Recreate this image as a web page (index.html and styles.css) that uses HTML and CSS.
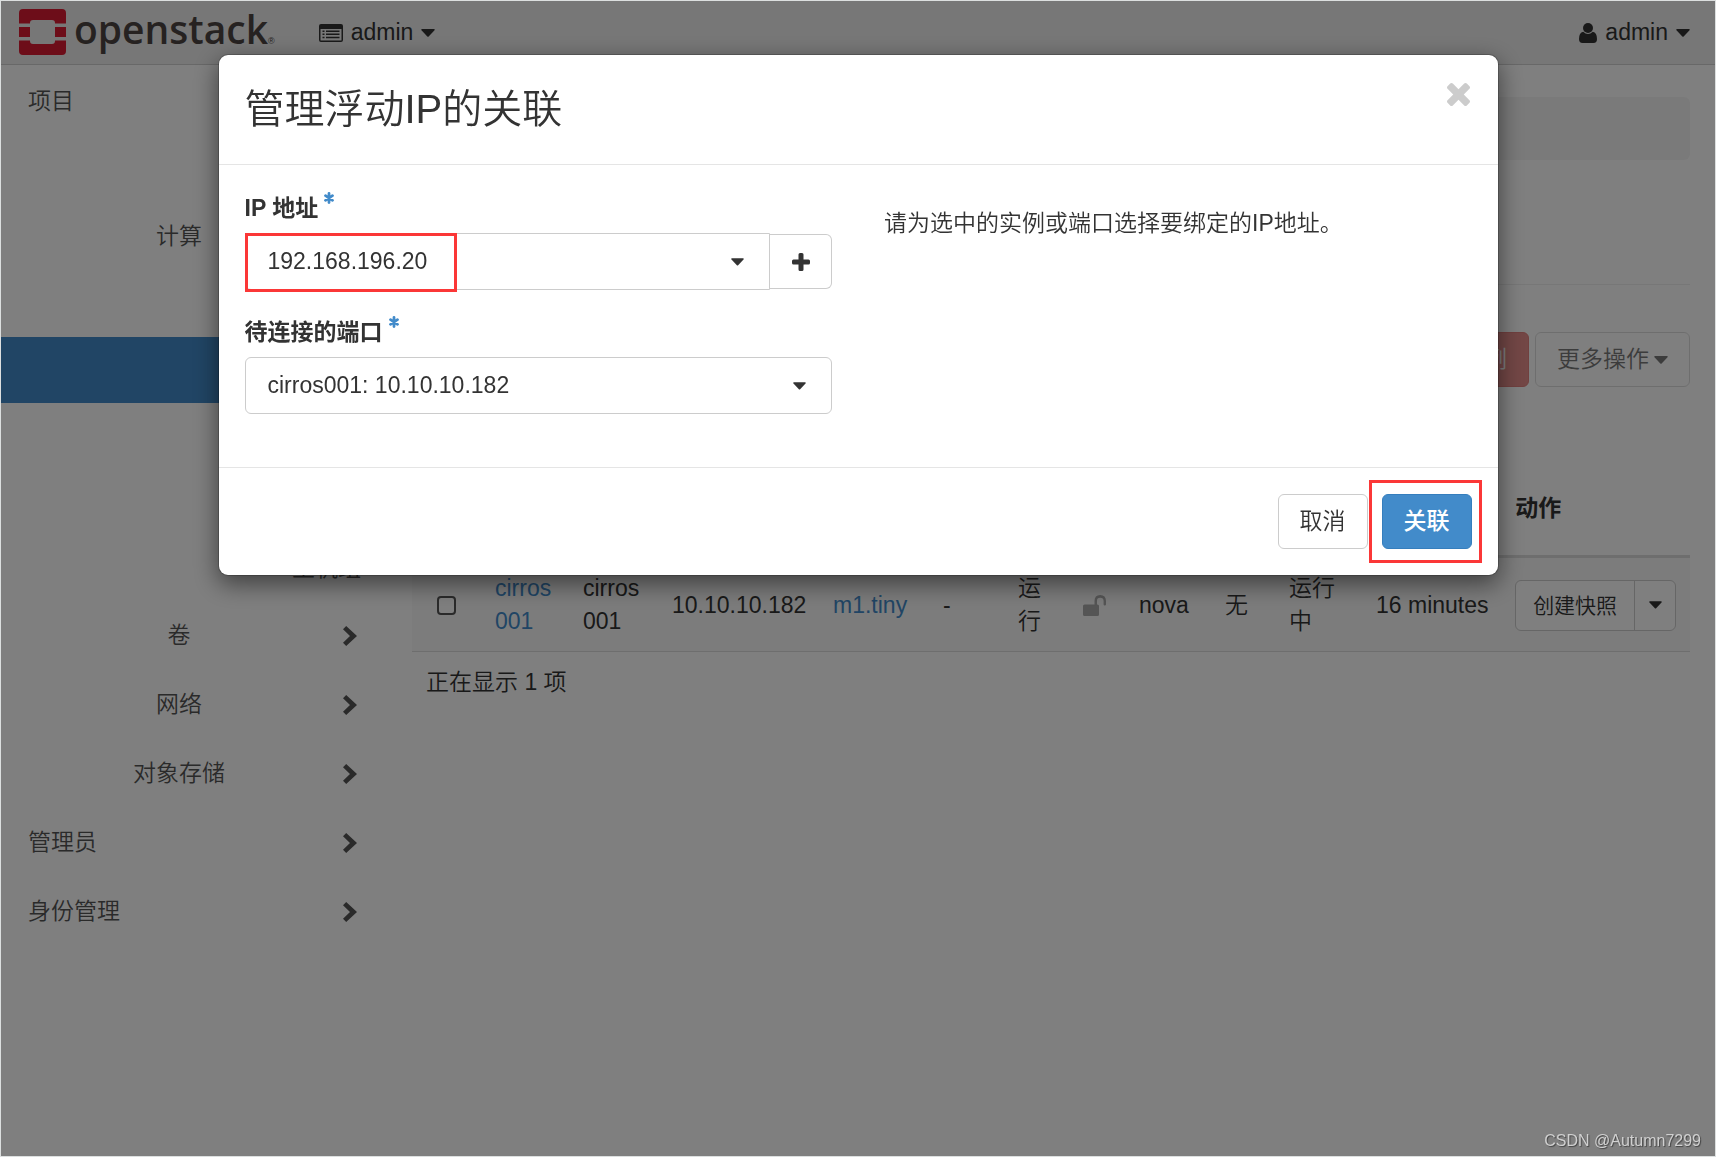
FILE: index.html
```html
<!DOCTYPE html>
<html lang="zh-CN">
<head>
<meta charset="utf-8">
<meta name="viewport" content="width=device-width, initial-scale=1">
<title>管理浮动IP的关联 - OpenStack Dashboard</title>
<link rel="stylesheet" href="styles.css">
</head>
<body>
<svg class="defs" aria-hidden="true">
  <symbol id="caret" viewBox="0 0 14 8"><path d="M1 0h12q1.200 .4 .5 1.300L7.700 7.500q-.7.700-1.400 0L.5 1.300Q-.2.400 1 0z"/></symbol>
  <symbol id="chevron" viewBox="0 0 14 20"><path d="M0 3.200 3.200 0 14 10 3.200 20 0 16.800 7 10z"/></symbol>
  <symbol id="chevron-down" viewBox="0 0 20 14"><path d="M3.200 0 0 3.200 10 14 20 3.200 16.800 0 10 7z"/></symbol>
  <symbol id="asterisk" viewBox="0 0 10 12"><path d="M5 1.500v9M1.500 3.700l7 4.600M8.500 3.700l-7 4.600" fill="none" stroke="currentColor" stroke-width="2.800" stroke-linecap="round"/></symbol>
</svg>

<header class="navbar">
  <a class="brand" href="#" aria-label="openstack">
    <svg class="mark" viewBox="0 0 47 46"><g fill="#da1a32"><path d="M4 0h39q4 0 4 4v10.500H36V14q0-3-3-3H14q-3 0-3 3v.5H0V4q0-4 4-4z"/><path d="M0 18h11v10H0zM36 18h11v10H36z"/><path d="M0 31.500h11v.5q0 3 3 3h19q3 0 3-3v-.5h11V42q0 4-4 4H4q-4 0-4-4z"/></g></svg>
    <span class="wordmark">openstack</span><span class="reg">®</span>
  </a>
  <button class="nav-menu" type="button">
    <svg class="icon-list" viewBox="0 0 24 18"><path fill-rule="evenodd" d="M2 0h20q2 0 2 2v14q0 2-2 2H2q-2 0-2-2V2q0-2 2-2zM1.500 5v11q0 .5.5.5h20q.5 0 .5-.5V5zM3.500 6.500h2V8h-2zM7 6.500h13.500V8H7zM3.500 9.500h2V11h-2zM7 9.500h13.500V11H7zM3.500 12.700h2v1.500h-2zM7 12.700h13.500v1.500H7z"/></svg>
    <span>admin</span>
    <svg class="caret"><use href="#caret"/></svg>
  </button>
  <button class="nav-menu nav-user" type="button">
    <svg class="icon-user" viewBox="0 0 18 20"><circle cx="9" cy="5" r="5"/><path d="M4.200 8.700Q9 13.300 13.800 8.700 18 9.500 18 16q0 4-3.500 4h-11Q0 20 0 16q0-6.500 4.200-7.300z"/></svg>
    <span>admin</span>
    <svg class="caret"><use href="#caret"/></svg>
  </button>
</header>

<div class="layout">
  <nav class="sidebar">
    <a class="group" href="#"><span>项目</span><svg class="down"><use href="#chevron-down"/></svg></a>
    <a class="leaf" href="#">API访问</a>
    <a class="group nested" href="#"><span>计算</span><svg class="down"><use href="#chevron-down"/></svg></a>
    <a class="leaf" href="#">概况</a>
    <a class="leaf active" href="#">实例</a>
    <a class="leaf" href="#">镜像</a>
    <a class="leaf" href="#">密钥对</a>
    <a class="leaf" href="#">主机组</a>
    <a class="group nested" href="#"><span>卷</span><svg class="right"><use href="#chevron"/></svg></a>
    <a class="group nested" href="#"><span>网络</span><svg class="right"><use href="#chevron"/></svg></a>
    <a class="group nested" href="#"><span>对象存储</span><svg class="right"><use href="#chevron"/></svg></a>
    <a class="group" href="#"><span>管理员</span><svg class="right"><use href="#chevron"/></svg></a>
    <a class="group" href="#"><span>身份管理</span><svg class="right"><use href="#chevron"/></svg></a>
  </nav>

  <main class="content">
    <div class="breadcrumb"></div>
    <h1 class="page-title">实例</h1>
    <div class="toolbar">
      <button class="btn danger" type="button" disabled>删除实例</button>
      <button class="btn" type="button" disabled>更多操作 <svg class="caret"><use href="#caret"/></svg></button>
    </div>
    <table class="instances">
      <colgroup>
        <col class="w-check"><col class="w-name"><col class="w-image"><col class="w-ip"><col class="w-flavor"><col class="w-key"><col class="w-status"><col class="w-lock"><col class="w-zone"><col class="w-task"><col class="w-power"><col class="w-age"><col class="w-action">
      </colgroup>
      <thead>
        <tr><th colspan="12"></th><th>动作</th></tr>
      </thead>
      <tbody>
        <tr>
          <td class="check"><input type="checkbox" aria-label="cirros001"></td>
          <td><a href="#">cirros<br>001</a></td>
          <td>cirros<br>001</td>
          <td>10.10.10.182</td>
          <td><a href="#">m1.tiny</a></td>
          <td>-</td>
          <td>运<br>行</td>
          <td><svg class="icon-lock" viewBox="0 0 23 21"><path d="M1.500 9.500h10V6q0-6 5.700-6T23 6v3.500q0 1-1.200 1t-1.200-1V6q0-3.200-3.400-3.200T14 6v3.500h.500q1.500 0 1.500 1.500v8.500q0 1.500-1.500 1.500h-13Q0 21 0 19.500V11q0-1.500 1.500-1.500z"/></svg></td>
          <td>nova</td>
          <td>无</td>
          <td>运行<br>中</td>
          <td>16 minutes</td>
          <td><div class="split"><button type="button">创建快照</button><button type="button" aria-label="更多"><svg class="caret small"><use href="#caret"/></svg></button></div></td>
        </tr>
      </tbody>
    </table>
    <p class="count">正在显示 1 项</p>
  </main>
</div>

<div class="backdrop">
  <form class="modal" role="dialog" aria-labelledby="modal-title">
    <div class="modal-header">
      <h2 id="modal-title">管理浮动IP的关联</h2>
      <button class="close" type="button" aria-label="关闭"><svg viewBox="110 -18 1188 1188"><path d="M1298 214q0 40-28 68l-294 294 294 294q28 28 28 68t-28 68l-136 136q-28 28-68 28t-68-28l-294-294-294 294q-28 28-68 28t-68-28l-136-136q-28-28-28-68t28-68l294-294-294-294q-28-28-28-68t28-68l136-136q28-28 68-28t68 28l294 294 294-294q28-28 68-28t68 28l136 136q28 28 28 68z"/></svg></button>
    </div>
    <div class="modal-body">
      <div class="fields">
        <div class="field">
          <label for="ip">IP 地址<svg class="required"><use href="#asterisk"/></svg></label>
          <div class="input-group">
            <div class="select joined"><select id="ip"><option>192.168.196.20</option></select><svg class="caret small"><use href="#caret"/></svg></div>
            <button class="btn add" type="button" aria-label="分配浮动IP"><svg viewBox="0 0 18 18"><path d="M8 0h2q1.500 0 1.500 1.500v5h5q1.500 0 1.500 1.500v2q0 1.500-1.500 1.500h-5v5q0 1.500-1.500 1.500H8q-1.500 0-1.500-1.500v-5h-5Q0 11.500 0 10V8q0-1.500 1.500-1.500h5v-5Q6.500 0 8 0z"/></svg></button>
            <span class="highlight around-ip"></span>
          </div>
        </div>
        <div class="field">
          <label for="port">待连接的端口<svg class="required"><use href="#asterisk"/></svg></label>
          <div class="select"><select id="port"><option>cirros001: 10.10.10.182</option></select><svg class="caret small"><use href="#caret"/></svg></div>
        </div>
      </div>
      <p class="help">请为选中的实例或端口选择要绑定的IP地址。</p>
    </div>
    <div class="modal-footer">
      <button class="btn" type="button">取消</button>
      <div class="submit"><button class="btn primary" type="submit">关联</button><span class="highlight around-submit"></span></div>
    </div>
  </form>
  <span class="watermark">CSDN @Autumn7299</span>
</div>
</body>
</html>
```
FILE: styles.css
```css
*, *::before, *::after { box-sizing: border-box; }

body {
  margin: 0;
  min-height: 100vh;
  border: 1px solid #dcdfdf;
  background: #fff;
  color: #333;
  font: 350 23px/33px "Liberation Sans", "Noto Sans CJK SC", sans-serif;
}

button, select, input { font: inherit; color: inherit; margin: 0; }
h1, h2, p { margin: 0; }
a { color: #428bca; text-decoration: none; }
svg { display: block; fill: currentColor; flex: none; }
.defs { position: absolute; width: 0; height: 0; }
.caret { width: 14px; height: 8px; }
.caret.small { width: 13px; height: 8px; }

/* Top bar */
.navbar {
  display: flex;
  align-items: center;
  height: 64px;
  padding: 0 25px 8px 18px;
  background: #eee;
  border-bottom: 1px solid #d0d0d0;
}
.brand { display: flex; align-items: center; height: 55px; color: #4d4542; }
.mark { width: 47px; height: 46px; margin-top: 7px; }
.wordmark { margin-left: 8px; font: 600 39px/44px "Open Sans", sans-serif; }
.reg { align-self: flex-end; font-size: 9px; line-height: 30px; }
.nav-menu {
  display: flex;
  align-items: center;
  gap: 8px;
  margin: 8px 0 0 44px;
  padding: 0;
  border: 0;
  background: none;
}
.nav-user { margin-left: auto; }
.icon-list { width: 24px; height: 18px; }
.icon-user { width: 18px; height: 20px; }

/* Side navigation and content */
.layout { display: flex; }
.sidebar { flex: 0 0 377px; padding-top: 2px; }
.sidebar a { display: flex; align-items: center; color: #555; }
.group { height: 69px; padding: 0 21px 0 27px; }
.group span { flex: 1; }
.nested span { text-align: center; }
.right { width: 14px; height: 20px; margin-left: 13px; }
.down { width: 20px; height: 14px; margin-left: 7px; }
.leaf { height: 66px; justify-content: flex-end; padding-right: 17px; }
.sidebar .active { background: #428bca; color: #fff; }

.content { flex: 1; min-width: 0; padding: 32px 25px 32px 34px; }
.breadcrumb { height: 63px; border-radius: 6px; background: #f5f5f5; }
.page-title { padding: 50px 0 25px; border-bottom: 1px solid #eee; font-size: 40px; line-height: 49px; font-weight: 350; }
.toolbar { display: flex; justify-content: flex-end; gap: 6px; margin: 47px 0 74px; }

.btn {
  display: flex;
  align-items: center;
  justify-content: center;
  gap: 5px;
  height: 55px;
  padding: 0 21px;
  border: 1px solid #ccc;
  border-radius: 6px;
  background: #fff;
}
.btn:disabled { opacity: .65; }
.danger { background: #d9534f; border-color: #d43f3a; color: #fff; }
.primary { background: #428bca; border-color: #357ebd; color: #fff; font-weight: 500; }

.instances { width: 100%; table-layout: fixed; border-collapse: separate; border-spacing: 0; }
.w-check { width: 70px; }
.w-name { width: 88px; }
.w-image { width: 89px; }
.w-ip { width: 161px; }
.w-flavor { width: 110px; }
.w-key { width: 75px; }
.w-status { width: 65px; }
.w-lock { width: 56px; }
.w-zone { width: 86px; }
.w-task { width: 64px; }
.w-power { width: 87px; }
.w-age { width: 139px; }
.w-action { width: 188px; }
.instances th { height: 97px; padding: 0 13px; border-bottom: 3px solid #ddd; text-align: left; font-weight: 700; }
.instances td { padding: 14px 13px 13px; border-bottom: 1px solid #ddd; background: #f9f9f9; white-space: nowrap; }
.instances .check { padding-left: 25px; }
.check input {
  display: block;
  appearance: none;
  width: 19px;
  height: 19px;
  border: 2px solid #555;
  border-radius: 4px;
  background: #fff;
}
.icon-lock { width: 23px; height: 21px; color: #aaa; }
.split { display: flex; width: 161px; border: 1px solid #ccc; border-radius: 6px; background: #fff; font-size: 21px; }
.split button { display: flex; align-items: center; justify-content: center; flex: 1; height: 49px; padding: 0; border: 0; background: none; }
.split button:first-child { flex: 0 0 119px; border-right: 1px solid #ccc; }
.count { padding: 14px; }

/* Dialog */
.backdrop {
  position: fixed;
  inset: 1px;
  padding-top: 53px;
  background: rgba(0, 0, 0, .5);
}
.modal {
  width: 90%;
  max-width: 1281px;
  margin: 0 auto;
  border: 1px solid rgba(0, 0, 0, .2);
  border-radius: 10px;
  background: #fff;
  background-clip: padding-box;
  box-shadow: 0 8px 24px rgba(0, 0, 0, .5);
}
.modal-header {
  display: flex;
  align-items: flex-start;
  justify-content: space-between;
  padding: 26px;
  border-bottom: 1px solid #e5e5e5;
}
.modal-header h2 { font-size: 40px; line-height: 57px; font-weight: 350; }
.close { padding: 2px; border: 0; background: none; color: #ccc; }
.close svg { width: 23px; height: 23px; }
.modal-body { display: grid; grid-template-columns: 1fr 1fr; gap: 52px; padding: 27px 26px; }
.field { margin-bottom: 26px; }
.field label { display: flex; gap: 6px; margin-bottom: 8px; font-weight: 700; }
.required { width: 10px; height: 12px; color: #428bca; }
.input-group { position: relative; display: flex; align-items: center; }
.select { display: grid; flex: 1; align-items: center; }
.select select {
  grid-area: 1 / 1;
  appearance: none;
  width: 100%;
  height: 57px;
  padding: 0 50px 0 22px;
  border: 1px solid #ccc;
  border-radius: 6px;
  background: #fff;
}
.select .caret { grid-area: 1 / 1; justify-self: end; margin-right: 26px; pointer-events: none; }
.joined select { border-radius: 6px 0 0 6px; }
.add { width: 62px; border-left: 0; border-radius: 0 6px 6px 0; }
.add svg { width: 18px; height: 18px; }
.help { margin-top: 15px; }
.modal-footer { display: flex; justify-content: flex-end; gap: 14px; padding: 26px; border-top: 1px solid #e5e5e5; }
.submit { position: relative; }

.highlight { position: absolute; border: 3px solid #fb3737; pointer-events: none; }
.around-ip { top: 0; left: 0; width: 212px; height: 59px; }
.around-submit { inset: -14px -10px -14px -13px; }

.watermark {
  position: absolute;
  right: 14px;
  bottom: 5px;
  color: #d0d0d0;
  font: 16px/20px "Liberation Sans", sans-serif;
  text-shadow: 1px 1px 1px #444;
}
```
